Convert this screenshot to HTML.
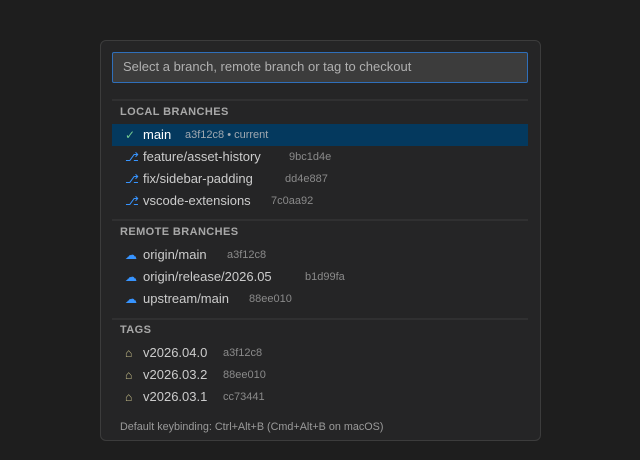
<!DOCTYPE html>
<html><head><meta charset="utf-8"><style>
*{margin:0;padding:0;box-sizing:border-box}
body{width:640px;height:460px;background:#1e1e1e;font-family:"Liberation Sans","DejaVu Sans",sans-serif;position:relative;overflow:hidden}
.panel{position:absolute;left:100px;top:40px;width:441px;height:401px;background:#252526;border:1px solid #3c3c3c;border-radius:6px}
.input{position:absolute;left:11px;top:11px;width:416px;height:31px;background:#3c3c3c;border:1.5px solid #2f6fba;border-radius:2px;color:#b0b0b0;font-size:13px;line-height:28px;padding-left:10px}
.sep{position:absolute;left:11px;width:416px;height:2px;background:#303031}
.hdr{position:absolute;left:19px;font-size:11px;font-weight:bold;color:#a8a8a8;letter-spacing:.4px}
.row{position:absolute;left:11px;width:416px;height:22px;line-height:22px;color:#cccccc;font-size:13px}
.row.sel{background:#04395e;color:#ffffff}
.ic{position:absolute;left:13px;font-size:12px}
.nm{position:absolute;left:31px}
.h{position:absolute;font-size:11px;color:#8a8a8a}
.sel .h{color:#a0a8b0}
.br{color:#3794ff}
.cl{color:#3794ff}
.tg{color:#c8c08a}
.ft{position:absolute;left:19px;top:380px;font-size:10.8px;color:#9a9a9a}
</style></head><body>
<div class="panel">
<div class="input">Select a branch, remote branch or tag to checkout</div>
<div class="sep" style="top:58px"></div>
<div class="hdr" style="top:65px">LOCAL BRANCHES</div>
<div class="row sel" style="top:83px"><span class="ic" style="color:#73c991">✓</span><span class="nm">main</span><span class="h" style="left:73px">a3f12c8 • current</span></div>
<div class="row" style="top:105px"><span class="ic br">⎇</span><span class="nm">feature/asset-history</span><span class="h" style="left:177px">9bc1d4e</span></div>
<div class="row" style="top:127px"><span class="ic br">⎇</span><span class="nm">fix/sidebar-padding</span><span class="h" style="left:173px">dd4e887</span></div>
<div class="row" style="top:149px"><span class="ic br">⎇</span><span class="nm">vscode-extensions</span><span class="h" style="left:159px">7c0aa92</span></div>
<div class="sep" style="top:178px"></div>
<div class="hdr" style="top:185px">REMOTE BRANCHES</div>
<div class="row" style="top:203px"><span class="ic cl">☁</span><span class="nm">origin/main</span><span class="h" style="left:115px">a3f12c8</span></div>
<div class="row" style="top:225px"><span class="ic cl">☁</span><span class="nm">origin/release/2026.05</span><span class="h" style="left:193px">b1d99fa</span></div>
<div class="row" style="top:247px"><span class="ic cl">☁</span><span class="nm">upstream/main</span><span class="h" style="left:137px">88ee010</span></div>
<div class="sep" style="top:277px"></div>
<div class="hdr" style="top:283px">TAGS</div>
<div class="row" style="top:301px"><span class="ic tg">⌂</span><span class="nm">v2026.04.0</span><span class="h" style="left:111px">a3f12c8</span></div>
<div class="row" style="top:323px"><span class="ic tg">⌂</span><span class="nm">v2026.03.2</span><span class="h" style="left:111px">88ee010</span></div>
<div class="row" style="top:345px"><span class="ic tg">⌂</span><span class="nm">v2026.03.1</span><span class="h" style="left:111px">cc73441</span></div>
<div class="ft">Default keybinding: Ctrl+Alt+B (Cmd+Alt+B on macOS)</div>
</div>
</body></html>
